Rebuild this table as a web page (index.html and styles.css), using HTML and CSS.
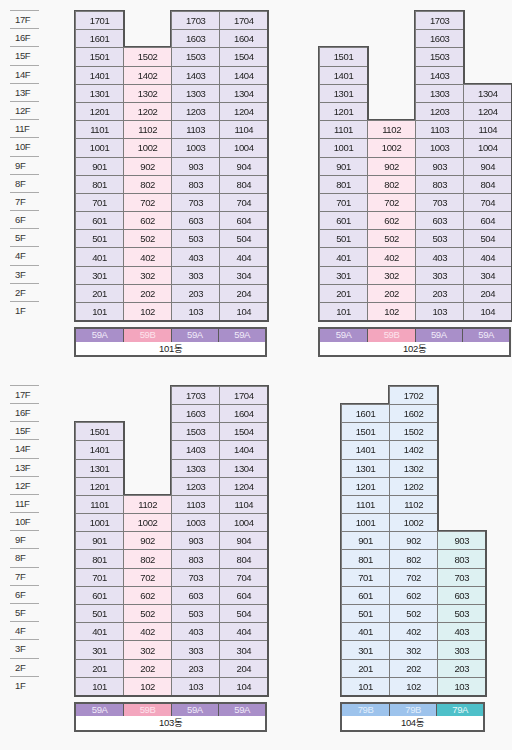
FILE: index.html
```html
<!DOCTYPE html>
<html lang="ko">
<head>
  <meta charset="UTF-8">
  <meta name="viewport" content="width=device-width, initial-scale=1.0">
  <title>동호수 배치도</title>
  <link rel="stylesheet" href="styles.css">
</head>
<body>

  <div class="block first">
    <ul class="floors"></ul>
    <div class="dong d101" id="d101"></div>
    <div class="dong d102" id="d102"></div>
  </div>

  <div class="block second">
    <ul class="floors"></ul>
    <div class="dong d103" id="d103"></div>
    <div class="dong d104" id="d104"></div>
  </div>

  <script>
    // top = 열(라인)별 최고층
    var dongs = [
      { id: "d101", name: "101동", types: ["59A", "59B", "59A", "59A"], top: [17, 15, 17, 17] },
      { id: "d102", name: "102동", types: ["59A", "59B", "59A", "59A"], top: [15, 11, 17, 13] },
      { id: "d103", name: "103동", types: ["59A", "59B", "59A", "59A"], top: [15, 11, 17, 17] },
      { id: "d104", name: "104동", types: ["79B", "79B", "79A"], top: [16, 17, 9] }
    ];

    function drawFloors(){
      var lists = document.querySelectorAll(".floors");
      var tag = "";
      for(var f = 17; f >= 1; f--){
        tag += '<li>' + f + 'F</li>';
      }
      for(var i = 0; i < lists.length; i++){
        lists[i].innerHTML = tag;
      }
    }

    function drawDong(d){
      var cols = d.types.length;
      var tag = '<div class="units col' + cols + '">';
      for(var f = 17; f >= 1; f--){
        for(var c = 0; c < cols; c++){
          if(f <= d.top[c]){
            tag += '<div class="unit t' + d.types[c] + '">' + f + '0' + (c + 1) + '</div>';
          }else{
            tag += '<div></div>';
          }
        }
      }
      tag += '</div>';
      tag += '<div class="types">';
      tag += '<div class="typeRow col' + cols + '">';
      for(var k = 0; k < cols; k++){
        tag += '<span class="t' + d.types[k] + '">' + d.types[k] + '</span>';
      }
      tag += '</div>';
      tag += '<div class="name">' + d.name + '</div>';
      tag += '</div>';
      document.getElementById(d.id).innerHTML = tag;
    }

    (function (){
      drawFloors();
      for(var i = 0; i < dongs.length; i++){
        drawDong(dongs[i]);
      }
    })();
  </script>
</body>
</html>
```

FILE: styles.css
```css
body {
  margin: 0;
  background: #f9f9f9;
  font-family: "Liberation Sans", "Noto Sans CJK KR", sans-serif;
  color: #222;
  overflow-x: hidden;
}
ul, li {
  list-style: none;
  margin: 0;
  padding: 0;
}
.block {
  display: flex;
  align-items: flex-start;
  padding-left: 10px;
}
.block.first {
  padding-top: 10px;
}
.block.second {
  margin-top: 27.6px;
}

/* 층 표시 */
.floors {
  width: 29px;
  flex-shrink: 0;
}
.floors li {
  height: 18.2px;
  box-sizing: border-box;
  border-top: 1px solid #ababab;
  padding-left: 5px;
  font-size: 9.5px;
  letter-spacing: -0.4px;
  line-height: 17px;
  color: #333;
}

/* 동 */
.dong {
  padding: 1px 2px 0 0;
  flex-shrink: 0;
}
.d101, .d103 {
  margin-left: 35px;
}
.d102 {
  margin-left: 48.6px;
}
.d104 {
  margin-left: 70.6px;
}
.units {
  display: grid;
  grid-template-rows: repeat(17, 18.2px);
  margin-left: 1px;
  filter: drop-shadow(-1px 0 0 #555) drop-shadow(2px 0 0 #555) drop-shadow(0 -1px 0 #555) drop-shadow(0 2px 0 #555);
}
.units.col4 {
  grid-template-columns: repeat(4, 48.1px);
}
.units.col3 {
  grid-template-columns: repeat(3, 48.1px);
}
.unit {
  box-sizing: border-box;
  border-left: 1px solid #7c7c7c;
  border-top: 1px solid #7c7c7c;
  display: flex;
  align-items: center;
  justify-content: center;
  font-size: 9.5px;
  letter-spacing: -0.4px;
  color: #222;
}
.unit.t59A { background: #e7e2f2; }
.unit.t59B { background: #fde6ee; }
.unit.t79B { background: #e4eefa; }
.unit.t79A { background: #ddf1f2; }

/* 타입 / 동 이름 */
.types {
  margin-top: 7px;
  border: 2px solid #5a5a5a;
  background: #fff;
}
.typeRow {
  display: grid;
  height: 12.5px;
}
.typeRow.col4 {
  grid-template-columns: repeat(4, 1fr);
}
.typeRow.col3 {
  grid-template-columns: repeat(3, 1fr);
}
.typeRow span {
  text-align: center;
  font-size: 9.5px;
  letter-spacing: -0.4px;
  line-height: 12.5px;
  border-left: 1px solid #5a5a5a;
}
.typeRow span:first-child {
  border-left: none;
}
.typeRow .t59A { background: #a98fc9; color: #f1ebf9; }
.typeRow .t59B { background: #f3a6be; color: #fde3ec; }
.typeRow .t79B { background: #9dc3ec; color: #e3effc; }
.typeRow .t79A { background: #4ec0c9; color: #e6f8f9; }
.name {
  height: 13.5px;
  line-height: 13.5px;
  text-align: center;
  font-size: 9.5px;
  letter-spacing: -0.3px;
  color: #222;
}
```
